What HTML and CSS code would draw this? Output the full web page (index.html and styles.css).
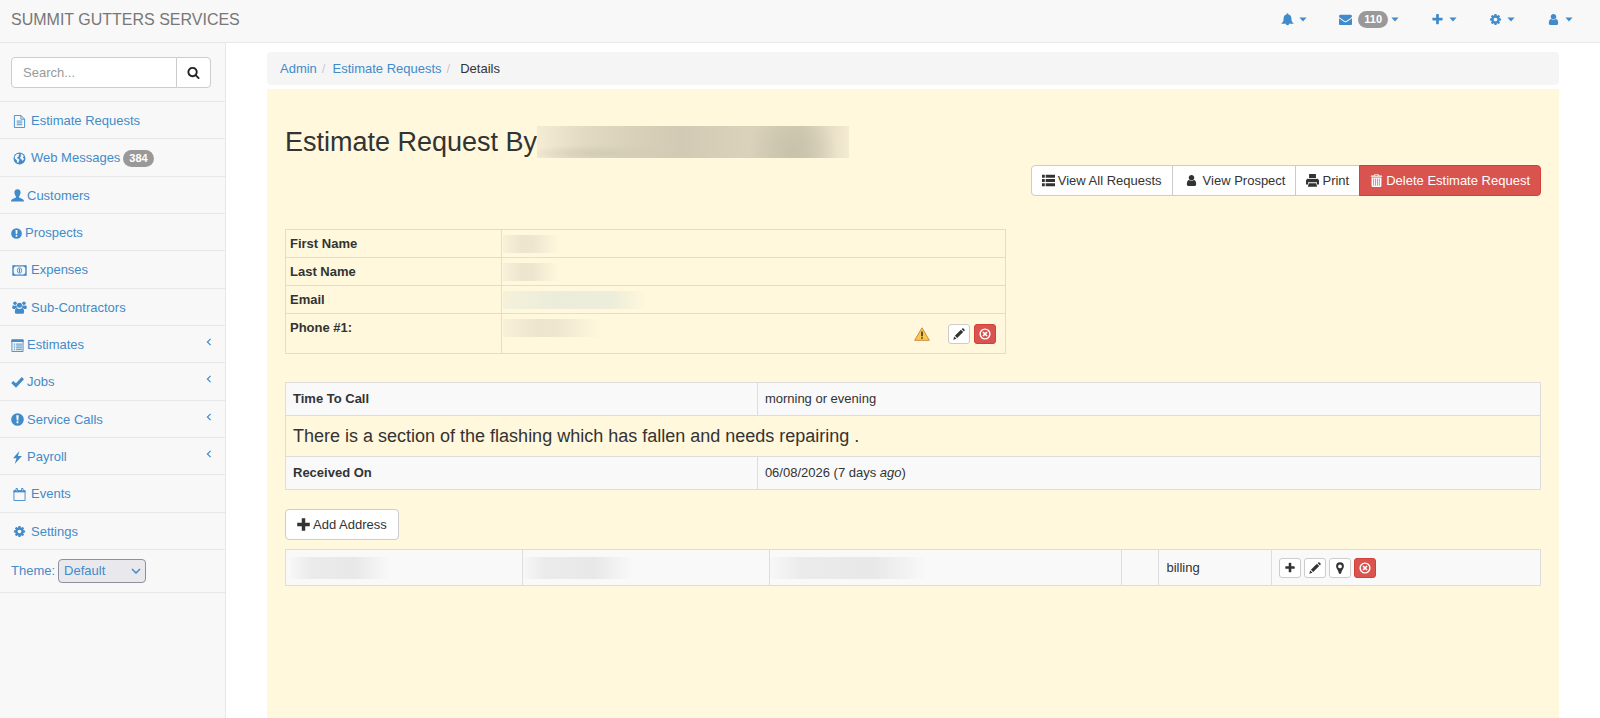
FILE: index.html
```html
<!DOCTYPE html>
<html lang="en">
<head>
<meta charset="utf-8">
<title>Estimate Request Details</title>
<link rel="stylesheet" href="styles.css">
</head>
<body>
<svg class="sprite" aria-hidden="true">
  <symbol id="bell" viewBox="0 0 14 14"><path d="M7 .3c.6 0 1 .4 1 1v.4c2.200.4 3.200 2 3.200 4.100 0 3 .8 4.200 2.300 5.200v.6H8.700a1.700 1.700 0 0 1-3.400 0H.5V11C2 10 2.800 8.800 2.800 5.800 2.800 3.700 3.800 2.100 6 1.700v-.4c0-.6.4-1 1-1z"/></symbol>
  <symbol id="envelope" viewBox="0 0 1792 1792"><path d="M1792 710v794q0 66-47 113t-113 47h-1472q-66 0-113-47t-47-113v-794q44 49 101 87 362 246 497 345 57 42 92.500 65.500t94.500 48 110 24.500h2q51 0 110-24.500t94.500-48 92.500-65.500q170-123 498-345 57-39 100-87zm0-294q0 79-49 151t-122 123q-376 261-468 325-10 7-42.500 31t-54 38.500-52 32.500-57.500 27-50 9h-2q-23 0-50-9t-57.500-27-52-32.500-54-38.500-42.500-31q-91-64-262-182.500t-205-142.500q-62-42-117-115.500t-55-136.500q0-78 41.500-130t118.500-52h1472q65 0 112.500 47t47.500 113z"/></symbol>
  <symbol id="plus" viewBox="0 0 1792 1792"><path d="M1600 736v192q0 40-28 68t-68 28h-416v416q0 40-28 68t-68 28h-192q-40 0-68-28t-28-68v-416h-416q-40 0-68-28t-28-68v-192q0-40 28-68t68-28h416v-416q0-40 28-68t68-28h192q40 0 68 28t28 68v416h416q40 0 68 28t28 68z"/></symbol>
  <symbol id="plus-bold" viewBox="0 0 12 12"><path d="M4.400.2h3.200v4.200h4.200v3.200H7.600v4.200H4.400V7.600H.2V4.400h4.200z"/></symbol>
  <symbol id="cog" viewBox="0 0 1792 1792"><path d="M1152 896q0-106-75-181t-181-75-181 75-75 181 75 181 181 75 181-75 75-181zm512-109v222q0 12-8 23t-20 13l-185 28q-19 54-39 91 35 50 107 138 10 12 10 25t-9 23q-27 37-99 108t-94 71q-12 0-26-9l-138-108q-44 23-91 38-16 136-29 186-7 28-36 28h-222q-14 0-24.500-8.500t-11.500-21.500l-28-184q-49-16-90-37l-141 107q-10 9-25 9-14 0-25-11-126-114-165-168-7-10-7-23 0-12 8-23 15-21 51-66.500t54-70.500q-27-50-41-99l-183-27q-13-2-21-12.500t-8-23.500v-222q0-12 8-23t19-13l186-28q14-46 39-92-40-57-107-138-10-12-10-24 0-10 9-23 26-36 98.500-107.500t94.500-71.500q13 0 26 10l138 107q44-23 91-38 16-136 29-186 7-28 36-28h222q14 0 24.500 8.500t11.500 21.500l28 184q49 16 90 37l142-107q9-9 24-9 13 0 25 10 129 119 165 170 7 8 7 22 0 12-8 23-15 21-51 66.500t-54 70.500q26 50 41 98l183 28q13 2 21 12.500t8 23.500z"/></symbol>
  <symbol id="user" viewBox="0 0 1792 1792"><path d="M1536 1399q0 109-62.500 187t-150.500 78h-854q-88 0-150.500-78t-62.500-187q0-85 8.500-160.500t31.500-152 58.500-131 94-89 134.500-34.500q131 128 313 128t313-128q76 0 134.500 34.500t94 89 58.500 131 31.500 152 8.500 160.500zm-256-887q0 159-112.500 271.500t-271.500 112.500-271.500-112.500-112.500-271.500 112.500-271.500 271.500-112.500 271.500 112.500 112.500 271.500z"/></symbol>
  <symbol id="caret" viewBox="0 0 8 5"><path d="M.4.4h7.200L4 4.600z"/></symbol>
  <symbol id="search" viewBox="0 0 1792 1792"><path d="M1216 832q0-185-131.500-316.500t-316.500-131.500-316.500 131.500-131.500 316.500 131.500 316.500 316.500 131.500 316.500-131.500 131.500-316.500zm512 832q0 52-38 90t-90 38q-54 0-90-38l-343-342q-179 124-399 124-143 0-273.500-55.500t-225-150-150-225-55.500-273.500 55.500-273.500 150-225 225-150 273.500-55.500 273.500 55.500 225 150 150 225 55.500 273.500q0 220-124 399l343 343q37 37 37 90z"/></symbol>
  <symbol id="file" viewBox="0 0 14 14"><path fill="none" stroke="currentColor" d="M1.500.5h7l4 4v9h-11zM8.500.5v4h4M4 6.500h6M4 8.500h6M4 10.500h6"/></symbol>
  <symbol id="globe" viewBox="0 0 14 14"><circle cx="7" cy="7" r="6.400"/><path fill="#f8f8f8" d="M3.500 2.700 6 2l1 .8-1 1 .3 1-1.500.8-.8 1.200 1.500.3 1.500 1.200-.6 1.500-1 2.200-1-1.200-.3-2L2 7 1.900 5.200zM8.500 2l2.300 1.300 1.300 2-1-.4-.8.8 1.500 1.300-.5 1.600-1.500.8-.8-1.800-1.500-.8.400-1.800 1.300-.7-.9-.8z"/></symbol>
  <symbol id="person" viewBox="0 0 14 14"><path d="M7 .2c2.100 0 3.300 1.300 3.300 3.500 0 1.700-.6 3-1.600 4v1.200c.4.700 1.500 1 2.900 1.500 1.600.5 2.400 1.300 2.400 3H0c0-1.700.8-2.500 2.400-3 1.400-.5 2.500-.8 2.900-1.500V7.700c-1-1-1.600-2.300-1.600-4C3.700 1.500 4.900.2 7 .2z"/></symbol>
  <symbol id="alert" viewBox="0 0 14 14"><circle cx="7" cy="7" r="6.800"/><path fill="#f8f8f8" d="M5.700 2.500h2.600L7.900 8H6.100zM6 9h2v2H6z"/></symbol>
  <symbol id="money" viewBox="0 0 16 14"><path fill="none" stroke="currentColor" stroke-width="1.500" d="M1 2h14v10H1z"/><path d="M1 2h3L1 5zM15 2h-3l3 3zM1 12h3l-3-3zM15 12h-3l3-3z"/><ellipse cx="8" cy="7" rx="2.300" ry="3" fill="none" stroke="currentColor"/><path d="M7.400 5h1.200v4H7.400z"/></symbol>
  <symbol id="group" viewBox="0 0 16 14"><circle cx="3.200" cy="2.500" r="1.900"/><circle cx="12.800" cy="2.500" r="1.900"/><circle cx="8" cy="4.500" r="2.700"/><path d="M1.200 4.500c1 .8 2.400.8 3.500.2 0 1 .4 2 1 2.600-1.300.1-2 .5-2.600 1.200H1.500C.6 8.500.2 8 .2 7.200c0-1.300.3-2.400 1-2.700zM14.800 4.500c-1 .8-2.400.8-3.500.2 0 1-.4 2-1 2.600 1.300.1 2 .5 2.600 1.200h1.600c.9 0 1.300-.5 1.300-1.300 0-1.300-.3-2.400-1-2.700zM5.300 7.600c1.600 1.200 3.800 1.200 5.400 0 1.700.1 2.300 1.900 2.300 4.200 0 1.300-.8 2-2 2H5c-1.200 0-2-.7-2-2 0-2.300.6-4.100 2.300-4.200z"/></symbol>
  <symbol id="list-alt" viewBox="0 0 14 14"><path fill="none" stroke="currentColor" d="M1 1h12v12.500H1z"/><path d="M.5.5h13v2.700H.5z"/><path fill="none" stroke="currentColor" d="M3 5.500h1.500M3 7.500h1.500M3 9.500h1.500M3 11.500h1.500M5.500 5.500H12M5.500 7.500H12M5.500 9.500H12M5.500 11.500H12"/></symbol>
  <symbol id="check" viewBox="0 0 14 14"><path d="m.2 7.500 2.300-2.200 2.800 2.500L11.600 1.200 14 3.400l-8.600 9.300z"/></symbol>
  <symbol id="bolt" viewBox="0 0 14 14"><path d="M9 0 2.200 7.800h3.700L4 14l7.800-8.500H7.500z"/></symbol>
  <symbol id="calendar" viewBox="0 0 14 14"><path fill="none" stroke="currentColor" d="M1 3h12v10.500H1z"/><path d="M.6 2.500h12.800v2.200H.6z"/><path fill="#f8f8f8" stroke="currentColor" d="M3.200.6h1.600v2.800H3.200zM9.200.6h1.600v2.800H9.200z"/></symbol>
  <symbol id="list" viewBox="0 0 14 14"><path d="M0 .8h3v3.200H0zM4 .8h10v3.200H4zM0 5.400h3v3.200H0zM4 5.400h10v3.200H4zM0 10h3v3.200H0zM4 10h10v3.200H4z"/></symbol>
  <symbol id="print" viewBox="0 0 14 14"><path d="M3.300 0h7.400v4.600H3.300zM1.300 5.200h11.400L14 6.700v4.600h-2.200V9H2.200v2.300H0V6.700zM3 10h8l1 3.600H2z"/><path fill="#fff" d="M2.500 4.500h9v.7h-9z"/></symbol>
  <symbol id="trash" viewBox="0 0 14 15"><path d="M4.500.2h5v1.500H13l.8 1.500H.2L1 1.700h3.500zM1.300 4.100h11.400v9.600q0 1.200-1.200 1.200h-9q-1.200 0-1.200-1.200z"/><path fill="none" stroke="#d9534f" d="M5.500 1.500h3"/><path stroke="#d9534f" stroke-width=".8" d="M3.700 5.300v8.200M5.900 5.300v8.200M8.100 5.300v8.200M10.300 5.300v8.200"/></symbol>
  <symbol id="pencil" viewBox="0 0 12 12"><path d="M.3 11.700 1.200 8.500l2.300 2.300zM1.900 7.800l6-6 2.300 2.300-6 6zM8.600 1.100 9.300.5q.6-.5 1.200 0l1 1q.5.600 0 1.200l-.6.700z"/></symbol>
  <symbol id="remove" viewBox="0 0 12 12"><circle cx="6" cy="6" r="4.900" fill="none" stroke="currentColor" stroke-width="1.400"/><path fill="none" stroke="currentColor" stroke-width="1.700" d="m4 4 4 4M8 4 4 8"/></symbol>
  <symbol id="pin" viewBox="0 0 12 12"><path fill-rule="evenodd" d="M6 .3a3.900 3.900 0 0 1 3.900 3.900c0 2.300-2.400 4.100-2.900 7.500H5C4.500 8.300 2.100 6.500 2.100 4.200A3.900 3.900 0 0 1 6 .3zm0 2.200a1.900 1.900 0 1 0 0 3.800 1.900 1.900 0 0 0 0-3.800z"/></symbol>
  <symbol id="warning" viewBox="0 0 16 14"><path fill="#fbc94f" stroke="#d08a3c" stroke-linejoin="round" d="M8 .8 15.300 13.300H.7z"/><path fill="#3c3526" d="M7.200 4.500h1.600v4.700H7.200zM7.200 10.200h1.600v1.500H7.200z"/></symbol>
  <symbol id="angle" viewBox="0 0 6 8"><path fill="none" stroke="currentColor" stroke-width="1.200" d="M4.600.8 1.400 4l3.200 3.200"/></symbol>
</svg>

<header class="navbar">
  <a class="brand" href="#">SUMMIT GUTTERS SERVICES</a>
  <nav class="top-links" aria-label="Account">
    <a href="#" aria-label="Alerts"><svg class="icon"><use href="#bell"/></svg><svg class="caret"><use href="#caret"/></svg></a>
    <a href="#" aria-label="Messages"><svg class="icon"><use href="#envelope"/></svg><span class="badge">110</span><svg class="caret near"><use href="#caret"/></svg></a>
    <a href="#" aria-label="Add"><svg class="icon"><use href="#plus"/></svg><svg class="caret"><use href="#caret"/></svg></a>
    <a href="#" aria-label="Settings"><svg class="icon"><use href="#cog"/></svg><svg class="caret"><use href="#caret"/></svg></a>
    <a href="#" aria-label="User"><svg class="icon"><use href="#user"/></svg><svg class="caret"><use href="#caret"/></svg></a>
  </nav>
</header>

<div class="layout">
  <aside class="sidebar">
    <form class="search">
      <input type="text" placeholder="Search..." aria-label="Search">
      <button type="button" aria-label="Search"><svg class="icon"><use href="#search"/></svg></button>
    </form>
    <ul class="menu">
      <li><a href="#"><svg class="icon wide"><use href="#file"/></svg>Estimate Requests</a></li>
      <li><a href="#"><svg class="icon wide"><use href="#globe"/></svg>Web Messages <span class="badge">384</span></a></li>
      <li><a href="#"><svg class="icon"><use href="#person"/></svg>Customers</a></li>
      <li><a href="#"><svg class="icon slim"><use href="#alert"/></svg>Prospects</a></li>
      <li><a href="#"><svg class="icon wide"><use href="#money"/></svg>Expenses</a></li>
      <li><a href="#"><svg class="icon wide"><use href="#group"/></svg>Sub-Contractors</a></li>
      <li><a href="#"><svg class="icon"><use href="#list-alt"/></svg>Estimates<svg class="angle"><use href="#angle"/></svg></a></li>
      <li><a href="#"><svg class="icon"><use href="#check"/></svg>Jobs<svg class="angle"><use href="#angle"/></svg></a></li>
      <li><a href="#"><svg class="icon"><use href="#alert"/></svg>Service Calls<svg class="angle"><use href="#angle"/></svg></a></li>
      <li><a href="#"><svg class="icon"><use href="#bolt"/></svg>Payroll<svg class="angle"><use href="#angle"/></svg></a></li>
      <li><a href="#"><svg class="icon wide"><use href="#calendar"/></svg>Events</a></li>
      <li><a href="#"><svg class="icon wide"><use href="#cog"/></svg>Settings</a></li>
    </ul>
    <div class="theme">
      <label for="theme">Theme:</label>
      <span class="select-box">
        <select id="theme"><option>Default</option></select>
        <svg class="chevron" viewBox="0 0 10 6"><path fill="none" stroke="currentColor" stroke-width="1.500" d="m1 1 4 4 4-4"/></svg>
      </span>
    </div>
  </aside>

  <main class="content">
    <ol class="breadcrumb">
      <li><a href="#">Admin</a></li>
      <li><a href="#">Estimate Requests</a></li>
      <li class="current">Details</li>
    </ol>
    <section class="panel">
      <h1>Estimate Request By<span class="redacted name"></span></h1>
      <div class="actions">
        <button type="button" class="btn"><svg class="icon"><use href="#list"/></svg>View All Requests</button>
        <button type="button" class="btn"><svg class="icon wide"><use href="#user"/></svg>View Prospect</button>
        <button type="button" class="btn"><svg class="icon"><use href="#print"/></svg>Print</button>
        <button type="button" class="btn danger"><svg class="icon"><use href="#trash"/></svg>Delete Estimate Request</button>
      </div>

      <table class="contact">
        <tr><th scope="row">First Name</th><td><span class="redacted short"></span></td></tr>
        <tr><th scope="row">Last Name</th><td><span class="redacted short"></span></td></tr>
        <tr><th scope="row">Email</th><td><span class="redacted email"></span></td></tr>
        <tr><th scope="row">Phone #1:</th><td>
          <div class="phone">
            <span class="redacted number"></span>
            <div class="phone-tools">
              <svg class="warn" role="img" aria-label="Warning"><use href="#warning"/></svg>
              <button type="button" class="btn mini" aria-label="Edit phone"><svg><use href="#pencil"/></svg></button>
              <button type="button" class="btn mini danger" aria-label="Remove phone"><svg><use href="#remove"/></svg></button>
            </div>
          </div>
        </td></tr>
      </table>

      <table class="details">
        <tr class="striped"><th scope="row">Time To Call</th><td>morning or evening</td></tr>
        <tr><td colspan="2" class="message">There is a section of the flashing which has fallen and needs repairing .</td></tr>
        <tr class="striped"><th scope="row">Received On</th><td>06/08/2026 (7 days <em>ago</em>)</td></tr>
      </table>

      <button type="button" class="btn add"><svg class="icon"><use href="#plus-bold"/></svg>Add Address</button>

      <table class="addresses">
        <colgroup><col class="c-street"><col class="c-city"><col class="c-region"><col class="c-zip"><col class="c-type"><col></colgroup>
        <tr class="striped">
          <td><span class="redacted grey first"></span></td>
          <td><span class="redacted grey second"></span></td>
          <td><span class="redacted grey third"></span></td>
          <td></td>
          <td>billing</td>
          <td>
            <div class="tools">
              <button type="button" class="btn mini" aria-label="Add"><svg><use href="#plus"/></svg></button>
              <button type="button" class="btn mini" aria-label="Edit address"><svg><use href="#pencil"/></svg></button>
              <button type="button" class="btn mini" aria-label="Map"><svg><use href="#pin"/></svg></button>
              <button type="button" class="btn mini danger" aria-label="Remove address"><svg><use href="#remove"/></svg></button>
            </div>
          </td>
        </tr>
      </table>
    </section>
  </main>
</div>
</body>
</html>
```
FILE: styles.css
```css
* { box-sizing: border-box; }

body {
  margin: 0;
  min-height: 100vh;
  display: flex;
  flex-direction: column;
  background: #fff;
  color: #333;
  font: 13px/18px "Liberation Sans", Arial, sans-serif;
}

a { color: #428bca; text-decoration: none; }
button, input, select { font: inherit; }
svg { fill: currentColor; flex: none; }
.sprite { display: none; }
.icon { width: 13px; height: 13px; }

.badge {
  padding: 0 6px;
  border-radius: 9px;
  background: #999;
  color: #fff;
  font-size: 11px;
  font-weight: bold;
  line-height: 17px;
}

/* Top bar */
.navbar {
  display: flex;
  justify-content: space-between;
  align-items: center;
  height: 43px;
  padding: 0 27px 3px 11px;
  background: #f8f8f8;
  border-bottom: 1px solid #e7e7e7;
}
.brand { color: #777; font-size: 16px; }
.top-links { display: flex; gap: 32px; }
.top-links a { display: flex; align-items: center; }
.caret { width: 8px; height: 5px; margin-left: 5px; }
.top-links .badge { margin-left: 6px; }
.caret.near { margin-left: 3px; }

/* Sidebar */
.layout { display: flex; flex: 1; }
.sidebar {
  flex: none;
  width: 226px;
  background: #f8f8f8;
  border-right: 1px solid #e7e7e7;
}
.search { display: flex; padding: 14px 14px 13px 11px; }
.search input {
  flex: 1;
  min-width: 0;
  height: 31px;
  padding: 0 11px;
  border: 1px solid #ccc;
  border-radius: 4px 0 0 4px;
  background: #fff;
}
.search input::placeholder { color: #999; }
.search button {
  display: flex;
  align-items: center;
  justify-content: center;
  width: 35px;
  margin-left: -1px;
  padding: 0;
  border: 1px solid #ccc;
  border-radius: 0 4px 4px 0;
  background: #fff;
  color: #222;
}
.menu {
  display: grid;
  grid-auto-rows: 1fr;
  min-height: 448px;
  margin: 0;
  padding: 0;
  list-style: none;
}
.menu li { display: flex; border-top: 1px solid #e7e7e7; }
.menu a {
  display: flex;
  flex: 1;
  align-items: center;
  padding: 2px 13px 0 11px;
}
.menu .icon { margin-right: 3px; }
.menu .icon.wide { width: 17px; }
.menu .icon.slim { width: 11px; }
.menu .badge { margin-left: 3px; }
.angle { width: 6px; height: 8px; margin: 0 0 6px auto; }
.theme {
  display: flex;
  align-items: center;
  gap: 3px;
  padding: 9px 11px;
  border-top: 1px solid #e7e7e7;
  border-bottom: 1px solid #e7e7e7;
  color: #428bca;
}
.select-box { display: grid; align-items: center; }
.select-box > * { grid-area: 1 / 1; }
.select-box select {
  width: 88px;
  height: 24px;
  padding: 0 5px;
  border: 1px solid #8f8f9d;
  border-radius: 4px;
  background: #e9e9ed;
  color: #428bca;
  appearance: none;
}
.chevron {
  width: 10px;
  height: 6px;
  margin-right: 5px;
  justify-self: end;
  pointer-events: none;
}

/* Content */
.content {
  display: flex;
  flex: 1;
  flex-direction: column;
  padding: 9px 41px 0;
}
.breadcrumb {
  display: flex;
  margin: 0 0 4px;
  padding: 8px 13px 7px;
  border-radius: 4px;
  background: #f5f5f5;
  list-style: none;
}
.breadcrumb li:not(:last-child)::after {
  content: "/";
  padding: 0 7px 0 5px;
  color: #ccc;
}
.current { padding-left: 3px; }
.panel { flex: 1; padding: 36px 18px; background: #fff8dc; }
h1 {
  display: flex;
  align-items: center;
  margin: 0 0 6px;
  font-size: 27px;
  font-weight: normal;
  line-height: 34px;
}

.btn {
  display: inline-flex;
  align-items: center;
  height: 31px;
  padding: 0 11px;
  border: 1px solid #ccc;
  border-radius: 4px;
  background: #fff;
  color: #333;
}
.btn .icon { margin-right: 3px; }
.btn .icon.wide { width: 17px; }
.btn.danger { background: #d9534f; border-color: #d43f3a; color: #fff; }
.btn.mini { justify-content: center; width: 22px; height: 20px; padding: 0; border-radius: 3px; }
.btn.mini svg { width: 12px; height: 12px; }
.actions { display: flex; justify-content: flex-end; margin-bottom: 33px; }
.actions .btn { padding: 0 10px; }
.actions .btn:not(:first-child) { margin-left: -1px; border-top-left-radius: 0; border-bottom-left-radius: 0; }
.actions .btn:not(:last-child) { border-top-right-radius: 0; border-bottom-right-radius: 0; }

/* Tables */
table { width: 100%; border-collapse: collapse; table-layout: fixed; }
th, td { border: 1px solid #ddd; text-align: left; }
.striped { background: #f9f9f9; }
.contact { width: calc(57% + 5px); margin-bottom: 28px; }
.contact th, .contact td { padding: 5px 4px 4px; vertical-align: top; line-height: 18px; }
.contact th { width: 30%; }
.contact td { padding-left: 1px; }
.phone { display: flex; justify-content: space-between; }
.phone-tools { display: flex; align-items: center; gap: 4px; padding: 5px; }
.warn { width: 16px; height: 14px; margin-right: 14px; }
.details { margin-bottom: 19px; }
.details th, .details td { padding: 7px; }
.details th { width: 37.6%; }
.details .message { padding: 10px 7px 9px; font-size: 18px; line-height: 21px; }
.add { margin-bottom: 9px; }
.addresses td { height: 36px; padding: 0 7px; }
.addresses td:nth-child(-n+3) { padding: 0 4px; }
.addresses td:nth-child(2), .addresses td:nth-child(3) { padding-left: 0; }
.c-street { width: 18.9%; }
.c-city { width: 19.7%; }
.c-region { width: 28%; }
.c-zip { width: 3%; }
.c-type { width: 9%; }
.tools { display: flex; gap: 3px; }

/* Blurred-out values */
.redacted {
  display: block;
  height: 18px;
  background: linear-gradient(90deg, #f8f0d8, #eee5cf 35%, #efe6d0 55%, #fff8dc);
}
.redacted.name {
  width: 312px;
  height: 32px;
  background:
    radial-gradient(circle at 82% 80%, #c8c1ab, transparent 44px),
    radial-gradient(ellipse at 22% 85%, #d3ccb5, transparent 80px),
    linear-gradient(90deg, #f4ecd3, #e2dac2 15%, #d9d1ba 30%, #d2cab4 46%, #dad2bb 68%, #d4ccb5 85%, #f4ebd2);
}
.redacted.short { width: 56px; }
.redacted.number { width: 98px; }
.redacted.email {
  width: 144px;
  background: linear-gradient(90deg, #f5f1da, #ebedda 35%, #ecedda 75%, #fff8dc);
}
.redacted.grey {
  height: 22px;
  background: linear-gradient(90deg, #f7f7f7, #ebebeb 20%, #e8e8e8 65%, #f9f9f9);
}
.redacted.first { width: 100px; }
.redacted.second { width: 110px; }
.redacted.third { width: 158px; }
```
